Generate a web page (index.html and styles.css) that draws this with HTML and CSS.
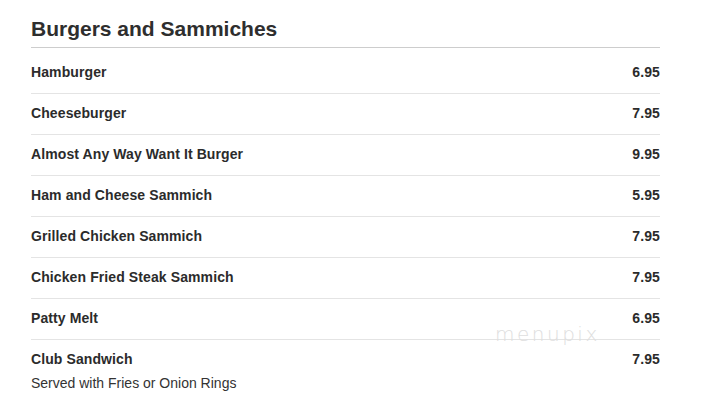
FILE: index.html
```html
<!DOCTYPE html>
<html>
<head>
<meta charset="utf-8">
<link rel="stylesheet" href="styles.css">
</head>
<body>
<div class="menu">
  <h2 class="section-title">Burgers and Sammiches</h2>
  <ul class="items">
    <li class="item"><div class="row"><span class="name">Hamburger</span><span class="price">6.95</span></div></li>
    <li class="item"><div class="row"><span class="name">Cheeseburger</span><span class="price">7.95</span></div></li>
    <li class="item"><div class="row"><span class="name">Almost Any Way Want It Burger</span><span class="price">9.95</span></div></li>
    <li class="item"><div class="row"><span class="name">Ham and Cheese Sammich</span><span class="price">5.95</span></div></li>
    <li class="item"><div class="row"><span class="name">Grilled Chicken Sammich</span><span class="price">7.95</span></div></li>
    <li class="item"><div class="row"><span class="name">Chicken Fried Steak Sammich</span><span class="price">7.95</span></div></li>
    <li class="item"><div class="row"><span class="name">Patty Melt</span><span class="price">6.95</span></div></li>
    <li class="item last"><div class="row"><span class="name">Club Sandwich</span><span class="price">7.95</span></div><p class="desc">Served with Fries or Onion Rings</p></li>
  </ul>
  <div class="watermark">menupix</div>
</div>
</body>
</html>
```
FILE: styles.css
```css
html, body {
  margin: 0;
  padding: 0;
  background: #fff;
}
body {
  font-family: "Liberation Sans", Arial, sans-serif;
  color: #2b2b2b;
}
.menu {
  position: relative;
  width: 629px;
  margin-left: 31px;
  padding-top: 17px;
}
.section-title {
  margin: 0;
  font-size: 21px;
  line-height: 24px;
  font-weight: bold;
  color: #2e2e2e;
  padding-bottom: 6px;
  border-bottom: 1px solid #cdcdcd;
}
.items {
  list-style: none;
  margin: 5px 0 0;
  padding: 0;
}
.item {
  padding: 11px 0 12px;
  border-bottom: 1px solid #e4e4e4;
}
.item.last {
  border-bottom: none;
}
.row {
  display: flex;
  justify-content: space-between;
  font-size: 14px;
  line-height: 17px;
  font-weight: bold;
  letter-spacing: 0.1px;
}
.desc {
  margin: 5px 0 0;
  font-size: 14px;
  line-height: 20px;
  color: #333;
}
.watermark {
  position: absolute;
  left: 464px;
  top: 323px;
  font-family: "DejaVu Sans", sans-serif;
  font-weight: 200;
  font-size: 20px;
  line-height: 23px;
  color: #dedede;
  letter-spacing: 2.5px;
}
```
